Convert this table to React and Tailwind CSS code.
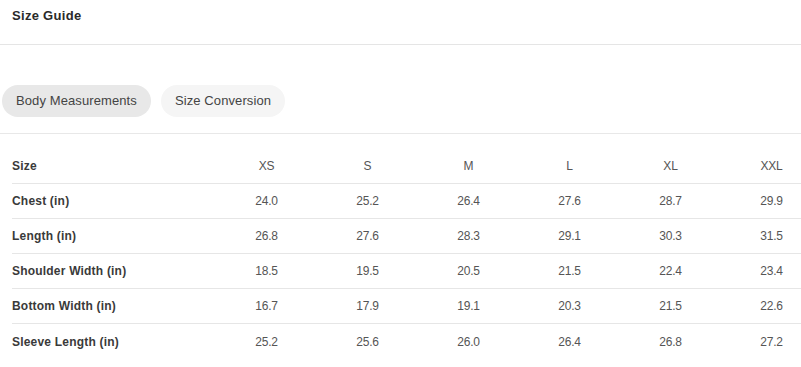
const sizes = ["XS", "S", "M", "L", "XL", "XXL"];

const rows = [
  { label: "Chest (in)", values: ["24.0", "25.2", "26.4", "27.6", "28.7", "29.9"] },
  { label: "Length (in)", values: ["26.8", "27.6", "28.3", "29.1", "30.3", "31.5"] },
  { label: "Shoulder Width (in)", values: ["18.5", "19.5", "20.5", "21.5", "22.4", "23.4"] },
  { label: "Bottom Width (in)", values: ["16.7", "17.9", "19.1", "20.3", "21.5", "22.6"] },
  { label: "Sleeve Length (in)", values: ["25.2", "25.6", "26.0", "26.4", "26.8", "27.2"] },
];

function Row({ label, values }) {
  return (
    <div className="grid grid-cols-[204px_repeat(6,101px)] h-[35px] items-center border-b border-[#e6e6e6] last:border-b-0">
      <div className="text-[12px] font-bold tracking-[0.2px] text-[#3a3a3a]">{label}</div>
      {values.map((v, i) => (
        <div key={i} className="text-center text-[12px] tracking-[-0.2px] text-[#555]">
          {v}
        </div>
      ))}
    </div>
  );
}

export default function App() {
  return (
    <div className="w-[801px] h-[367px] overflow-hidden bg-white font-['Liberation_Sans',Arial,sans-serif]">
      <div className="h-[45px] px-3 pt-[6px] border-b border-[#e5e5e5]">
        <h2 className="text-[13px] font-bold text-[#2a2a2a] tracking-[0.3px]">Size Guide</h2>
      </div>
      <div className="flex gap-[10px] px-[2px] pt-[40px] pb-[16px] border-b border-[#e8e8e8]">
        <button className="h-[32px] px-[14px] rounded-full bg-[#e8e8e8] text-[13px] tracking-[0.1px] text-[#444]">
          Body Measurements
        </button>
        <button className="h-[32px] px-[14px] rounded-full bg-[#f5f5f5] text-[13px] tracking-[0.1px] text-[#444]">
          Size Conversion
        </button>
      </div>
      <div className="pl-3 pt-[15px] w-[830px]">
        <Row label="Size" values={sizes} />
        {rows.map((r) => (
          <Row key={r.label} label={r.label} values={r.values} />
        ))}
      </div>
    </div>
  );
}
